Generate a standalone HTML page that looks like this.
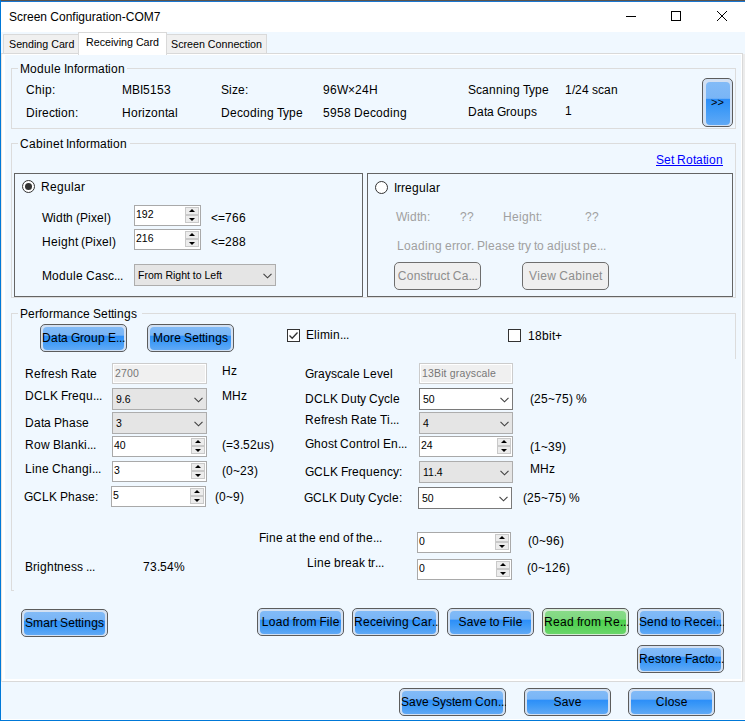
<!DOCTYPE html><html><head><meta charset="utf-8"><style>
*{margin:0;padding:0}
html,body{width:745px;height:721px;overflow:hidden;background:#f0f8ff}
body{position:relative;font-family:"Liberation Sans",sans-serif;font-size:12px;color:#000}
div,span,b,i,svg{position:absolute;display:block}
.t{white-space:nowrap;font-size:12px;line-height:14px}
.t a,.btn a,.gbtn a{position:static;display:inline-block;color:inherit}
.w2{width:2px}
.w3{width:3px}
.w4{width:4px}
.w5{width:5px}
.w6{width:6px}
.w7{width:7px}
.w8{width:8px}
.w9{width:9px}
.w10{width:10px}
.w11{width:11px}
.w12{width:12px}
.btn{box-sizing:border-box;border:1px solid #5c5c5c;border-radius:5px;background:#d2e0f2}
.btn i{left:2px;top:2px;right:2px;bottom:1px;border-radius:4px;background:linear-gradient(#82bbf7 0%,#79b5f6 36%,#2c8ef8 39%,#3a98f7 60%,#60a9f5 100%)}
.btn.g{background:#d6ecd6}
.btn.g i{background:linear-gradient(#88db88 0%,#80d880 36%,#4bd04b 39%,#55d255 60%,#6ad66a 100%)}
.btn span{left:0;right:0;top:0;bottom:0;text-align:center;line-height:26px;white-space:nowrap;font-size:12px}
.gbtn{box-sizing:border-box;border:1px solid #6e6e6e;border-radius:5px;background:#efefef}
.gbtn span{left:0;right:0;top:0;text-align:center;line-height:26px;white-space:nowrap;color:#8d8d8d;font-size:12px}
.spin{box-sizing:border-box;border:1px solid #a9a9a9;background:#fff}
.spin span{left:1px;top:1px;font-size:10.5px;line-height:14px;white-space:nowrap}
.spin b{right:1px;width:14px;box-sizing:border-box;border:1px solid #c9c9c9;background:#ececec}
.spin b.up{top:1px;height:8px}
.spin b.dn{bottom:2px;height:8px}
.spin b.up:after{content:"";position:absolute;left:3px;top:1px;border-left:3px solid transparent;border-right:3px solid transparent;border-bottom:3.5px solid #000}
.spin b.dn:after{content:"";position:absolute;left:3px;top:1.5px;border-left:3px solid transparent;border-right:3px solid transparent;border-top:3.5px solid #000}
.combo{box-sizing:border-box;border:1px solid #adadad;background:#e5e5e5}
.combo.w{border-color:#7a7a7a;background:#fff}
.combo span{left:3px;top:3px;font-size:10.5px;line-height:14px;white-space:nowrap}
.dis{box-sizing:border-box;border:1px solid #cccccc;background:#f0f0f0;box-shadow:inset 0 0 0 1px #fff}
.dis span{left:2px;top:2px;font-size:10.5px;line-height:14px;white-space:nowrap;color:#777;letter-spacing:0.15px}
.tab{box-sizing:border-box;border:1px solid #d9d9d9;background:#f0f0f0}
.tab span{white-space:nowrap;font-size:10.7px;line-height:14px}
</style></head><body>
<div style="left:0px;top:0px;width:745px;height:1px;background:#5a544e;"></div>
<div style="left:0px;top:1px;width:745px;height:1px;background:#1a76d0;"></div>
<div style="left:0px;top:0px;width:1px;height:721px;background:#0078d7;"></div>
<div style="left:0px;top:720px;width:745px;height:1px;background:#0078d7;"></div>
<div style="left:1px;top:2px;width:744px;height:30px;background:#fff;"></div>
<div style="left:1px;top:719px;width:744px;height:1px;background:#fff;"></div>
<div class="t" style="left:9px;top:10px;font-size:12px">Screen Configuration-COM7</div>
<div style="left:626px;top:16px;width:10px;height:1px;background:#000;"></div>
<div style="left:671px;top:11px;width:10px;height:10px;border:1px solid #000;box-sizing:border-box;"></div>
<svg style="left:716px;top:10px" width="12" height="12"><path d="M1 1L11 11M11 1L1 11" stroke="#000" stroke-width="1"/></svg>
<div class="tab" style="left:3px;top:34px;width:76px;height:20px"><span style="left:5px;top:2px">Sending Card</span></div>
<div class="tab" style="left:166px;top:34px;width:101px;height:20px"><span style="left:4px;top:2px">Screen Connection</span></div>
<div style="left:1px;top:53px;width:742px;height:629px;border:1px solid #d9d9d9;box-sizing:border-box;background:#fff;"></div>
<div style="left:743px;top:54px;width:2px;height:628px;background:#ececec;"></div>
<div style="left:5px;top:55px;width:736px;height:624px;background:#f0f8ff;"></div>
<div style="left:1px;top:54px;width:1px;height:628px;background:#ebe6e1;"></div>
<div class="tab" style="left:78px;top:32px;width:89px;height:23px;background:#fff;border-bottom:none"><span style="left:7px;top:2px">Receiving Card</span></div>
<div style="left:11px;top:68px;width:725px;height:61px;border:1px solid #dcdcdc;box-sizing:border-box;"></div>
<div style="left:18px;top:67px;width:109px;height:3px;background:#f0f8ff;"></div>
<div class="t" style="left:20px;top:62px;"><a class=w10>M</a><a class=w7>o</a><a class=w7>d</a><a class=w7>u</a><a class=w3>l</a><a class=w7>e</a><a class=w3> </a><a class=w3>I</a><a class=w7>n</a><a class=w3>f</a><a class=w7>o</a><a class=w4>r</a><a class=w10>m</a><a class=w7>a</a><a class=w3>t</a><a class=w3>i</a><a class=w7>o</a><a class=w7>n</a></div>
<div class="t" style="left:26px;top:83px;"><a class=w9>C</a><a class=w7>h</a><a class=w3>i</a><a class=w7>p</a><a class=w3>:</a></div>
<div class="t" style="left:122px;top:83px;"><a class=w10>M</a><a class=w8>B</a><a class=w3>I</a><a class=w7>5</a><a class=w7>1</a><a class=w7>5</a><a class=w7>3</a></div>
<div class="t" style="left:221px;top:83px;"><a class=w8>S</a><a class=w3>i</a><a class=w6>z</a><a class=w7>e</a><a class=w3>:</a></div>
<div class="t" style="left:323px;top:83px;"><a class=w7>9</a><a class=w7>6</a><a class=w11>W</a><a class=w7>×</a><a class=w7>2</a><a class=w7>4</a><a class=w9>H</a></div>
<div class="t" style="left:468px;top:83px;"><a class=w8>S</a><a class=w6>c</a><a class=w7>a</a><a class=w7>n</a><a class=w7>n</a><a class=w3>i</a><a class=w7>n</a><a class=w7>g</a><a class=w3> </a><a class=w6>T</a><a class=w6>y</a><a class=w7>p</a><a class=w7>e</a></div>
<div class="t" style="left:565px;top:83px;"><a class=w7>1</a><a class=w3>/</a><a class=w7>2</a><a class=w7>4</a><a class=w3> </a><a class=w6>s</a><a class=w6>c</a><a class=w7>a</a><a class=w7>n</a></div>
<div class="t" style="left:26px;top:106px;"><a class=w9>D</a><a class=w3>i</a><a class=w4>r</a><a class=w7>e</a><a class=w6>c</a><a class=w3>t</a><a class=w3>i</a><a class=w7>o</a><a class=w7>n</a><a class=w3>:</a></div>
<div class="t" style="left:122px;top:106px;"><a class=w9>H</a><a class=w7>o</a><a class=w4>r</a><a class=w3>i</a><a class=w6>z</a><a class=w7>o</a><a class=w7>n</a><a class=w3>t</a><a class=w7>a</a><a class=w3>l</a></div>
<div class="t" style="left:221px;top:106px;"><a class=w9>D</a><a class=w7>e</a><a class=w6>c</a><a class=w7>o</a><a class=w7>d</a><a class=w3>i</a><a class=w7>n</a><a class=w7>g</a><a class=w3> </a><a class=w6>T</a><a class=w6>y</a><a class=w7>p</a><a class=w7>e</a></div>
<div class="t" style="left:323px;top:106px;"><a class=w7>5</a><a class=w7>9</a><a class=w7>5</a><a class=w7>8</a><a class=w3> </a><a class=w9>D</a><a class=w7>e</a><a class=w6>c</a><a class=w7>o</a><a class=w7>d</a><a class=w3>i</a><a class=w7>n</a><a class=w7>g</a></div>
<div class="t" style="left:468px;top:105px;"><a class=w9>D</a><a class=w7>a</a><a class=w3>t</a><a class=w7>a</a><a class=w3> </a><a class=w9>G</a><a class=w4>r</a><a class=w7>o</a><a class=w7>u</a><a class=w7>p</a><a class=w6>s</a></div>
<div class="t" style="left:565px;top:104px;"><a class=w7>1</a></div>
<div class="btn" style="left:702px;top:78px;width:31px;height:49px"><i style="left:2.5px;top:2.5px;background:linear-gradient(#82bbf7 0%,#79b5f6 38%,#2c8ef8 40%,#3a98f7 60%,#60a9f5 100%)"></i><span style="line-height:46px;font-size:11px;left:0px">&gt;&gt;</span></div>
<div style="left:11px;top:143px;width:725px;height:155px;border:1px solid #dcdcdc;box-sizing:border-box;"></div>
<div style="left:18px;top:142px;width:112px;height:3px;background:#f0f8ff;"></div>
<div class="t" style="left:20px;top:137px;"><a class=w9>C</a><a class=w7>a</a><a class=w7>b</a><a class=w3>i</a><a class=w7>n</a><a class=w7>e</a><a class=w3>t</a><a class=w3> </a><a class=w3>I</a><a class=w7>n</a><a class=w3>f</a><a class=w7>o</a><a class=w4>r</a><a class=w10>m</a><a class=w7>a</a><a class=w3>t</a><a class=w3>i</a><a class=w7>o</a><a class=w7>n</a></div>
<div class="t" style="left:656px;top:153px;color:#0000ff;"><a class=w8>S</a><a class=w7>e</a><a class=w3>t</a><a class=w3> </a><a class=w9>R</a><a class=w7>o</a><a class=w3>t</a><a class=w7>a</a><a class=w3>t</a><a class=w3>i</a><a class=w7>o</a><a class=w7>n</a></div>
<div style="left:656px;top:165px;width:67px;height:1px;background:#0000ff;"></div>
<div style="left:14px;top:173px;width:349px;height:124px;border:1px solid #646464;box-sizing:border-box;"></div>
<div style="left:367px;top:173px;width:366px;height:124px;border:1px solid #646464;box-sizing:border-box;"></div>
<div style="left:22px;top:180px;width:13px;height:13px;box-sizing:border-box;border:1px solid #333;border-radius:50%;background:#fff"><div style="left:2px;top:2px;width:7px;height:7px;border-radius:50%;background:#333"></div></div>
<div class="t" style="left:41px;top:180px;"><a class=w9>R</a><a class=w7>e</a><a class=w7>g</a><a class=w7>u</a><a class=w3>l</a><a class=w7>a</a><a class=w4>r</a></div>
<div style="left:375px;top:181px;width:13px;height:13px;box-sizing:border-box;border:1px solid #333;border-radius:50%;background:#fff"></div>
<div class="t" style="left:394px;top:181px;"><a class=w3>I</a><a class=w4>r</a><a class=w4>r</a><a class=w7>e</a><a class=w7>g</a><a class=w7>u</a><a class=w3>l</a><a class=w7>a</a><a class=w4>r</a></div>
<div class="t" style="left:42px;top:211px;"><a class=w11>W</a><a class=w3>i</a><a class=w7>d</a><a class=w3>t</a><a class=w7>h</a><a class=w3> </a><a class=w4>(</a><a class=w8>P</a><a class=w3>i</a><a class=w6>x</a><a class=w7>e</a><a class=w3>l</a><a class=w4>)</a></div>
<div class="t" style="left:42px;top:235px;"><a class=w9>H</a><a class=w7>e</a><a class=w3>i</a><a class=w7>g</a><a class=w7>h</a><a class=w3>t</a><a class=w3> </a><a class=w4>(</a><a class=w8>P</a><a class=w3>i</a><a class=w6>x</a><a class=w7>e</a><a class=w3>l</a><a class=w4>)</a></div>
<div class="t" style="left:42px;top:269px;"><a class=w10>M</a><a class=w7>o</a><a class=w7>d</a><a class=w7>u</a><a class=w3>l</a><a class=w7>e</a><a class=w3> </a><a class=w9>C</a><a class=w7>a</a><a class=w6>s</a><a class=w6>c</a><a class=w3>.</a><a class=w3>.</a><a class=w3>.</a></div>
<div class="spin" style="left:134px;top:205px;width:67px;height:21px"><span>192</span><b class="up"></b><b class="dn"></b></div>
<div class="spin" style="left:134px;top:229px;width:67px;height:21px"><span>216</span><b class="up"></b><b class="dn"></b></div>
<div class="t" style="left:211px;top:211px;"><a class=w7>&lt;</a><a class=w7>=</a><a class=w7>7</a><a class=w7>6</a><a class=w7>6</a></div>
<div class="t" style="left:211px;top:235px;"><a class=w7>&lt;</a><a class=w7>=</a><a class=w7>2</a><a class=w7>8</a><a class=w7>8</a></div>
<div class="combo" style="left:134px;top:264px;width:142px;height:22px"><span>From Right to Left</span><svg width="9" height="6" style="position:absolute;right:3px;top:8px"><path d="M0.5 0.8 L4.5 4.8 L8.5 0.8" fill="none" stroke="#404040" stroke-width="1.1"/></svg></div>
<div class="t" style="left:396px;top:210px;color:#a0a0a0;"><a class=w11>W</a><a class=w3>i</a><a class=w7>d</a><a class=w3>t</a><a class=w7>h</a><a class=w3>:</a></div>
<div class="t" style="left:460px;top:210px;color:#a0a0a0;"><a class=w7>?</a><a class=w7>?</a></div>
<div class="t" style="left:503px;top:210px;color:#a0a0a0;"><a class=w9>H</a><a class=w7>e</a><a class=w3>i</a><a class=w7>g</a><a class=w7>h</a><a class=w3>t</a><a class=w3>:</a></div>
<div class="t" style="left:585px;top:210px;color:#a0a0a0;"><a class=w7>?</a><a class=w7>?</a></div>
<div class="t" style="left:397px;top:239px;color:#a0a0a0;"><a class=w7>L</a><a class=w7>o</a><a class=w7>a</a><a class=w7>d</a><a class=w3>i</a><a class=w7>n</a><a class=w7>g</a><a class=w3> </a><a class=w7>e</a><a class=w4>r</a><a class=w4>r</a><a class=w7>o</a><a class=w4>r</a><a class=w3>.</a><a class=w3> </a><a class=w8>P</a><a class=w3>l</a><a class=w7>e</a><a class=w7>a</a><a class=w6>s</a><a class=w7>e</a><a class=w3> </a><a class=w3>t</a><a class=w4>r</a><a class=w6>y</a><a class=w3> </a><a class=w3>t</a><a class=w7>o</a><a class=w3> </a><a class=w7>a</a><a class=w7>d</a><a class=w3>j</a><a class=w7>u</a><a class=w6>s</a><a class=w3>t</a><a class=w3> </a><a class=w7>p</a><a class=w7>e</a><a class=w3>.</a><a class=w3>.</a><a class=w3>.</a></div>
<div class="gbtn" style="left:394px;top:262px;width:87px;height:28px"><span><a class=w9>C</a><a class=w7>o</a><a class=w7>n</a><a class=w6>s</a><a class=w3>t</a><a class=w4>r</a><a class=w7>u</a><a class=w6>c</a><a class=w3>t</a><a class=w3> </a><a class=w9>C</a><a class=w7>a</a><a class=w3>.</a><a class=w3>.</a><a class=w3>.</a></span></div>
<div class="gbtn" style="left:522px;top:262px;width:87px;height:28px"><span><a class=w8>V</a><a class=w3>i</a><a class=w7>e</a><a class=w9>w</a><a class=w3> </a><a class=w9>C</a><a class=w7>a</a><a class=w7>b</a><a class=w3>i</a><a class=w7>n</a><a class=w7>e</a><a class=w3>t</a></span></div>
<div style="left:11px;top:313px;width:725px;height:278px;border:1px solid #dcdcdc;box-sizing:border-box;"></div>
<div style="left:18px;top:312px;width:124px;height:3px;background:#f0f8ff;"></div>
<div class="t" style="left:20px;top:307px;"><a class=w8>P</a><a class=w7>e</a><a class=w4>r</a><a class=w3>f</a><a class=w7>o</a><a class=w4>r</a><a class=w10>m</a><a class=w7>a</a><a class=w7>n</a><a class=w6>c</a><a class=w7>e</a><a class=w3> </a><a class=w8>S</a><a class=w7>e</a><a class=w3>t</a><a class=w3>t</a><a class=w3>i</a><a class=w7>n</a><a class=w7>g</a><a class=w6>s</a></div>
<div style="left:14px;top:359px;width:724px;height:234px;background:#f0f8ff;"></div>
<div class="btn" style="left:40px;top:324px;width:87px;height:28px"><i></i><span style="text-align:left;left:1px;right:-1px;overflow:hidden"><a class=w9>D</a><a class=w7>a</a><a class=w3>t</a><a class=w7>a</a><a class=w3> </a><a class=w9>G</a><a class=w4>r</a><a class=w7>o</a><a class=w7>u</a><a class=w7>p</a><a class=w3> </a><a class=w8>E</a><a class=w3>.</a><a class=w3>.</a><a class=w3>.</a></span></div>
<div class="btn" style="left:147px;top:324px;width:87px;height:28px"><i></i><span><a class=w10>M</a><a class=w7>o</a><a class=w4>r</a><a class=w7>e</a><a class=w3> </a><a class=w8>S</a><a class=w7>e</a><a class=w3>t</a><a class=w3>t</a><a class=w3>i</a><a class=w7>n</a><a class=w7>g</a><a class=w6>s</a></span></div>
<div style="left:287px;top:329px;width:13px;height:13px;box-sizing:border-box;border:1px solid #333;background:#fff"><svg width="11" height="11" style="left:0;top:0"><path d="M1.5 5.5 L4.2 8.3 L9.5 2.5" fill="none" stroke="#333" stroke-width="1.3"/></svg></div>
<div class="t" style="left:306px;top:328px;"><a class=w8>E</a><a class=w3>l</a><a class=w3>i</a><a class=w10>m</a><a class=w3>i</a><a class=w7>n</a><a class=w3>.</a><a class=w3>.</a><a class=w3>.</a></div>
<div style="left:508px;top:329px;width:13px;height:13px;box-sizing:border-box;border:1px solid #333;background:#fff"></div>
<div class="t" style="left:528px;top:329px;"><a class=w7>1</a><a class=w7>8</a><a class=w7>b</a><a class=w3>i</a><a class=w3>t</a><a class=w7>+</a></div>
<div class="t" style="left:25px;top:367px;"><a class=w9>R</a><a class=w7>e</a><a class=w3>f</a><a class=w4>r</a><a class=w7>e</a><a class=w6>s</a><a class=w7>h</a><a class=w3> </a><a class=w9>R</a><a class=w7>a</a><a class=w3>t</a><a class=w7>e</a></div>
<div class="dis" style="left:112px;top:363px;width:95px;height:21px"><span>2700</span></div>
<div class="t" style="left:222px;top:364px;"><a class=w9>H</a><a class=w6>z</a></div>
<div class="t" style="left:25px;top:389px;"><a class=w9>D</a><a class=w9>C</a><a class=w7>L</a><a class=w8>K</a><a class=w3> </a><a class=w7>F</a><a class=w4>r</a><a class=w7>e</a><a class=w7>q</a><a class=w7>u</a><a class=w3>.</a><a class=w3>.</a><a class=w3>.</a></div>
<div class="combo" style="left:112px;top:388px;width:95px;height:22px"><span>9.6</span><svg width="9" height="6" style="position:absolute;right:3px;top:8px"><path d="M0.5 0.8 L4.5 4.8 L8.5 0.8" fill="none" stroke="#404040" stroke-width="1.1"/></svg></div>
<div class="t" style="left:222px;top:389px;"><a class=w10>M</a><a class=w9>H</a><a class=w6>z</a></div>
<div class="t" style="left:25px;top:416px;"><a class=w9>D</a><a class=w7>a</a><a class=w3>t</a><a class=w7>a</a><a class=w3> </a><a class=w8>P</a><a class=w7>h</a><a class=w7>a</a><a class=w6>s</a><a class=w7>e</a></div>
<div class="combo" style="left:112px;top:412px;width:95px;height:22px"><span>3</span><svg width="9" height="6" style="position:absolute;right:3px;top:8px"><path d="M0.5 0.8 L4.5 4.8 L8.5 0.8" fill="none" stroke="#404040" stroke-width="1.1"/></svg></div>
<div class="t" style="left:25px;top:438px;"><a class=w9>R</a><a class=w7>o</a><a class=w9>w</a><a class=w3> </a><a class=w8>B</a><a class=w3>l</a><a class=w7>a</a><a class=w7>n</a><a class=w6>k</a><a class=w3>i</a><a class=w3>.</a><a class=w3>.</a><a class=w3>.</a></div>
<div class="spin" style="left:112px;top:436px;width:95px;height:21px"><span>40</span><b class="up"></b><b class="dn"></b></div>
<div class="t" style="left:222px;top:438px;"><a class=w4>(</a><a class=w7>=</a><a class=w7>3</a><a class=w3>.</a><a class=w7>5</a><a class=w7>2</a><a class=w7>u</a><a class=w6>s</a><a class=w4>)</a></div>
<div class="t" style="left:25px;top:462px;"><a class=w7>L</a><a class=w3>i</a><a class=w7>n</a><a class=w7>e</a><a class=w3> </a><a class=w9>C</a><a class=w7>h</a><a class=w7>a</a><a class=w7>n</a><a class=w7>g</a><a class=w3>i</a><a class=w3>.</a><a class=w3>.</a><a class=w3>.</a></div>
<div class="spin" style="left:112px;top:461px;width:95px;height:21px"><span>3</span><b class="up"></b><b class="dn"></b></div>
<div class="t" style="left:222px;top:464px;"><a class=w4>(</a><a class=w7>0</a><a class=w7>~</a><a class=w7>2</a><a class=w7>3</a><a class=w4>)</a></div>
<div class="t" style="left:24px;top:490px;"><a class=w9>G</a><a class=w9>C</a><a class=w7>L</a><a class=w8>K</a><a class=w3> </a><a class=w8>P</a><a class=w7>h</a><a class=w7>a</a><a class=w6>s</a><a class=w7>e</a><a class=w3>:</a></div>
<div class="spin" style="left:111px;top:486px;width:95px;height:21px"><span>5</span><b class="up"></b><b class="dn"></b></div>
<div class="t" style="left:215px;top:490px;"><a class=w4>(</a><a class=w7>0</a><a class=w7>~</a><a class=w7>9</a><a class=w4>)</a></div>
<div class="t" style="left:305px;top:367px;"><a class=w9>G</a><a class=w4>r</a><a class=w7>a</a><a class=w6>y</a><a class=w6>s</a><a class=w6>c</a><a class=w7>a</a><a class=w3>l</a><a class=w7>e</a><a class=w3> </a><a class=w7>L</a><a class=w7>e</a><a class=w6>v</a><a class=w7>e</a><a class=w3>l</a></div>
<div class="dis" style="left:419px;top:363px;width:94px;height:21px"><span>13Bit grayscale</span></div>
<div class="t" style="left:305px;top:392px;"><a class=w9>D</a><a class=w9>C</a><a class=w7>L</a><a class=w8>K</a><a class=w3> </a><a class=w9>D</a><a class=w7>u</a><a class=w3>t</a><a class=w6>y</a><a class=w3> </a><a class=w9>C</a><a class=w6>y</a><a class=w6>c</a><a class=w3>l</a><a class=w7>e</a></div>
<div class="combo w" style="left:419px;top:388px;width:94px;height:22px"><span>50</span><svg width="9" height="6" style="position:absolute;right:3px;top:8px"><path d="M0.5 0.8 L4.5 4.8 L8.5 0.8" fill="none" stroke="#404040" stroke-width="1.1"/></svg></div>
<div class="t" style="left:530px;top:392px;"><a class=w4>(</a><a class=w7>2</a><a class=w7>5</a><a class=w7>~</a><a class=w7>7</a><a class=w7>5</a><a class=w4>)</a><a class=w3> </a><a class=w11>%</a></div>
<div class="t" style="left:305px;top:413px;"><a class=w9>R</a><a class=w7>e</a><a class=w3>f</a><a class=w4>r</a><a class=w7>e</a><a class=w6>s</a><a class=w7>h</a><a class=w3> </a><a class=w9>R</a><a class=w7>a</a><a class=w3>t</a><a class=w7>e</a><a class=w3> </a><a class=w7>T</a><a class=w3>i</a><a class=w3>.</a><a class=w3>.</a><a class=w3>.</a></div>
<div class="combo" style="left:419px;top:412px;width:94px;height:22px"><span>4</span><svg width="9" height="6" style="position:absolute;right:3px;top:8px"><path d="M0.5 0.8 L4.5 4.8 L8.5 0.8" fill="none" stroke="#404040" stroke-width="1.1"/></svg></div>
<div class="t" style="left:305px;top:437px;"><a class=w9>G</a><a class=w7>h</a><a class=w7>o</a><a class=w6>s</a><a class=w3>t</a><a class=w3> </a><a class=w9>C</a><a class=w7>o</a><a class=w7>n</a><a class=w3>t</a><a class=w4>r</a><a class=w7>o</a><a class=w3>l</a><a class=w3> </a><a class=w8>E</a><a class=w7>n</a><a class=w3>.</a><a class=w3>.</a><a class=w3>.</a></div>
<div class="spin" style="left:419px;top:436px;width:94px;height:21px"><span>24</span><b class="up"></b><b class="dn"></b></div>
<div class="t" style="left:530px;top:440px;"><a class=w4>(</a><a class=w7>1</a><a class=w7>~</a><a class=w7>3</a><a class=w7>9</a><a class=w4>)</a></div>
<div class="t" style="left:305px;top:465px;"><a class=w9>G</a><a class=w9>C</a><a class=w7>L</a><a class=w8>K</a><a class=w3> </a><a class=w7>F</a><a class=w4>r</a><a class=w7>e</a><a class=w7>q</a><a class=w7>u</a><a class=w7>e</a><a class=w7>n</a><a class=w6>c</a><a class=w6>y</a><a class=w3>:</a></div>
<div class="combo" style="left:419px;top:461px;width:94px;height:22px"><span>11.4</span><svg width="9" height="6" style="position:absolute;right:3px;top:8px"><path d="M0.5 0.8 L4.5 4.8 L8.5 0.8" fill="none" stroke="#404040" stroke-width="1.1"/></svg></div>
<div class="t" style="left:530px;top:462px;"><a class=w10>M</a><a class=w9>H</a><a class=w6>z</a></div>
<div class="t" style="left:304px;top:491px;"><a class=w9>G</a><a class=w9>C</a><a class=w7>L</a><a class=w8>K</a><a class=w3> </a><a class=w9>D</a><a class=w7>u</a><a class=w3>t</a><a class=w6>y</a><a class=w3> </a><a class=w9>C</a><a class=w6>y</a><a class=w6>c</a><a class=w3>l</a><a class=w7>e</a><a class=w3>:</a></div>
<div class="combo w" style="left:418px;top:487px;width:94px;height:22px"><span>50</span><svg width="9" height="6" style="position:absolute;right:3px;top:8px"><path d="M0.5 0.8 L4.5 4.8 L8.5 0.8" fill="none" stroke="#404040" stroke-width="1.1"/></svg></div>
<div class="t" style="left:523px;top:491px;"><a class=w4>(</a><a class=w7>2</a><a class=w7>5</a><a class=w7>~</a><a class=w7>7</a><a class=w7>5</a><a class=w4>)</a><a class=w3> </a><a class=w11>%</a></div>
<div class="t" style="left:259px;top:531px;"><a class=w7>F</a><a class=w3>i</a><a class=w7>n</a><a class=w7>e</a><a class=w3> </a><a class=w7>a</a><a class=w3>t</a><a class=w3> </a><a class=w3>t</a><a class=w7>h</a><a class=w7>e</a><a class=w3> </a><a class=w7>e</a><a class=w7>n</a><a class=w7>d</a><a class=w3> </a><a class=w7>o</a><a class=w3>f</a><a class=w3> </a><a class=w3>t</a><a class=w7>h</a><a class=w7>e</a><a class=w3>.</a><a class=w3>.</a><a class=w3>.</a></div>
<div class="spin" style="left:417px;top:532px;width:94px;height:21px"><span>0</span><b class="up"></b><b class="dn"></b></div>
<div class="t" style="left:528px;top:534px;"><a class=w4>(</a><a class=w7>0</a><a class=w7>~</a><a class=w7>9</a><a class=w7>6</a><a class=w4>)</a></div>
<div class="t" style="left:307px;top:556px;"><a class=w7>L</a><a class=w3>i</a><a class=w7>n</a><a class=w7>e</a><a class=w3> </a><a class=w7>b</a><a class=w4>r</a><a class=w7>e</a><a class=w7>a</a><a class=w6>k</a><a class=w3> </a><a class=w3>t</a><a class=w4>r</a><a class=w3>.</a><a class=w3>.</a><a class=w3>.</a></div>
<div class="spin" style="left:417px;top:559px;width:95px;height:21px"><span>0</span><b class="up"></b><b class="dn"></b></div>
<div class="t" style="left:527px;top:561px;"><a class=w4>(</a><a class=w7>0</a><a class=w7>~</a><a class=w7>1</a><a class=w7>2</a><a class=w7>6</a><a class=w4>)</a></div>
<div class="t" style="left:25px;top:560px;"><a class=w8>B</a><a class=w4>r</a><a class=w3>i</a><a class=w7>g</a><a class=w7>h</a><a class=w3>t</a><a class=w7>n</a><a class=w7>e</a><a class=w6>s</a><a class=w6>s</a><a class=w3> </a><a class=w3>.</a><a class=w3>.</a><a class=w3>.</a></div>
<div class="t" style="left:143px;top:560px;"><a class=w7>7</a><a class=w7>3</a><a class=w3>.</a><a class=w7>5</a><a class=w7>4</a><a class=w11>%</a></div>
<div class="btn" style="left:21px;top:609px;width:87px;height:28px"><i></i><span><a class=w8>S</a><a class=w10>m</a><a class=w7>a</a><a class=w4>r</a><a class=w3>t</a><a class=w3> </a><a class=w8>S</a><a class=w7>e</a><a class=w3>t</a><a class=w3>t</a><a class=w3>i</a><a class=w7>n</a><a class=w7>g</a><a class=w6>s</a></span></div>
<div class="btn" style="left:257px;top:608px;width:87px;height:28px"><i></i><span><a class=w7>L</a><a class=w7>o</a><a class=w7>a</a><a class=w7>d</a><a class=w3> </a><a class=w3>f</a><a class=w4>r</a><a class=w7>o</a><a class=w10>m</a><a class=w3> </a><a class=w7>F</a><a class=w3>i</a><a class=w3>l</a><a class=w7>e</a></span></div>
<div class="btn" style="left:352px;top:608px;width:87px;height:28px"><i></i><span style="text-align:left;left:1px;right:-1px;overflow:hidden"><a class=w9>R</a><a class=w7>e</a><a class=w6>c</a><a class=w7>e</a><a class=w3>i</a><a class=w6>v</a><a class=w3>i</a><a class=w7>n</a><a class=w7>g</a><a class=w3> </a><a class=w9>C</a><a class=w7>a</a><a class=w4>r</a><a class=w3>.</a><a class=w3>.</a><a class=w3>.</a></span></div>
<div class="btn" style="left:447px;top:608px;width:87px;height:28px"><i></i><span><a class=w8>S</a><a class=w7>a</a><a class=w6>v</a><a class=w7>e</a><a class=w3> </a><a class=w3>t</a><a class=w7>o</a><a class=w3> </a><a class=w7>F</a><a class=w3>i</a><a class=w3>l</a><a class=w7>e</a></span></div>
<div class="btn g" style="left:542px;top:608px;width:87px;height:28px"><i></i><span style="text-align:left;left:1px;right:-1px;overflow:hidden"><a class=w9>R</a><a class=w7>e</a><a class=w7>a</a><a class=w7>d</a><a class=w3> </a><a class=w3>f</a><a class=w4>r</a><a class=w7>o</a><a class=w10>m</a><a class=w3> </a><a class=w9>R</a><a class=w7>e</a><a class=w3>.</a><a class=w3>.</a><a class=w3>.</a></span></div>
<div class="btn" style="left:637px;top:608px;width:87px;height:28px"><i></i><span style="text-align:left;left:1px;right:-1px;overflow:hidden"><a class=w8>S</a><a class=w7>e</a><a class=w7>n</a><a class=w7>d</a><a class=w3> </a><a class=w3>t</a><a class=w7>o</a><a class=w3> </a><a class=w9>R</a><a class=w7>e</a><a class=w6>c</a><a class=w7>e</a><a class=w3>i</a><a class=w3>.</a><a class=w3>.</a><a class=w3>.</a></span></div>
<div class="btn" style="left:637px;top:645px;width:87px;height:28px"><i></i><span style="text-align:left;left:1px;right:-1px;overflow:hidden"><a class=w9>R</a><a class=w7>e</a><a class=w6>s</a><a class=w3>t</a><a class=w7>o</a><a class=w4>r</a><a class=w7>e</a><a class=w3> </a><a class=w7>F</a><a class=w7>a</a><a class=w6>c</a><a class=w3>t</a><a class=w7>o</a><a class=w3>.</a><a class=w3>.</a><a class=w3>.</a></span></div>
<div class="btn" style="left:399px;top:688px;width:107px;height:28px"><i></i><span style="text-align:left;left:1px;right:-1px;overflow:hidden"><a class=w8>S</a><a class=w7>a</a><a class=w6>v</a><a class=w7>e</a><a class=w3> </a><a class=w8>S</a><a class=w6>y</a><a class=w6>s</a><a class=w3>t</a><a class=w7>e</a><a class=w10>m</a><a class=w3> </a><a class=w9>C</a><a class=w7>o</a><a class=w7>n</a><a class=w3>.</a><a class=w3>.</a><a class=w3>.</a></span></div>
<div class="btn" style="left:524px;top:688px;width:87px;height:28px"><i></i><span><a class=w8>S</a><a class=w7>a</a><a class=w6>v</a><a class=w7>e</a></span></div>
<div class="btn" style="left:628px;top:688px;width:87px;height:28px"><i></i><span><a class=w9>C</a><a class=w3>l</a><a class=w7>o</a><a class=w6>s</a><a class=w7>e</a></span></div>
</body></html>
